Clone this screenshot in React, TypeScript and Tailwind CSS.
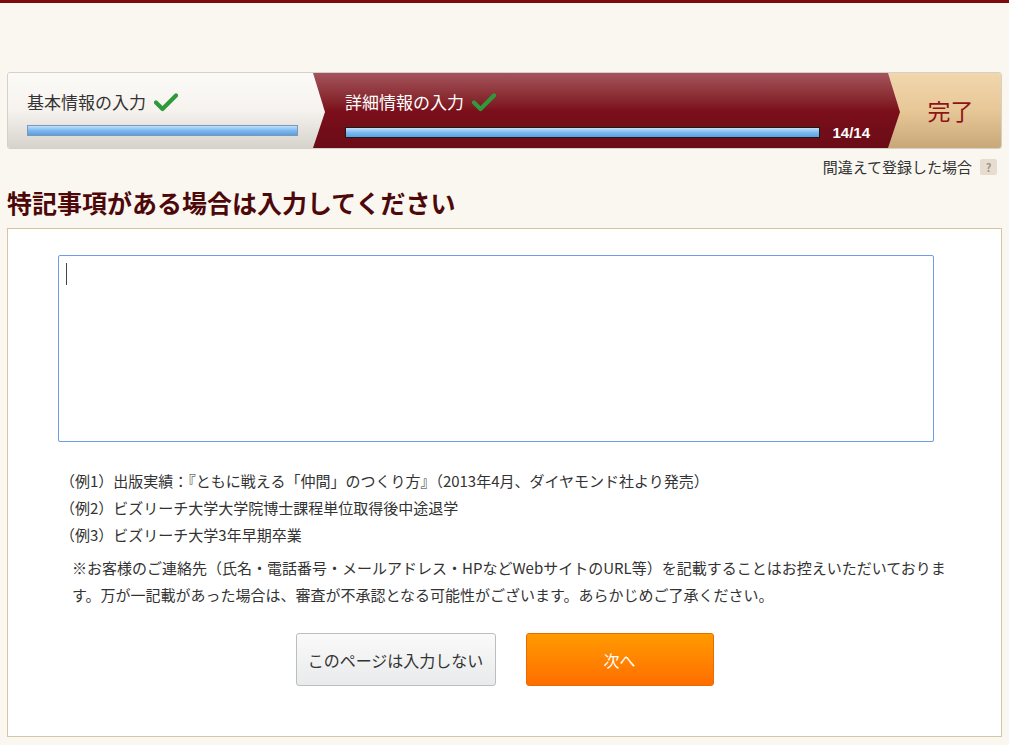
import React from "react"

const font = { fontFamily: '"Noto Sans CJK JP", "Noto Sans", sans-serif' }

function Check() {
  return (
    <svg width="24" height="20" viewBox="0 0 24 20" className="ml-2 shrink-0">
      <path d="M2 10.5 L8.5 17 L22 3.5" fill="none" stroke="#2e9a3c" strokeWidth="4.2" strokeLinecap="round" strokeLinejoin="round" />
    </svg>
  )
}

function Bar({ dark }: { dark?: boolean }) {
  return (
    <div
      className={
        "h-[11px] border bg-gradient-to-b from-[#bfe0fb] via-[#7db8ee] to-[#5d9fe0] " +
        (dark ? "border-[#1b1b1b]" : "border-[#7c98b6]")
      }
    />
  )
}

function Steps() {
  return (
    <div className="mx-[7px] mt-[69px] flex h-[77px] overflow-hidden rounded-[3px] border border-[#d5d0c9]">
      {/* step 1 */}
      <div className="relative z-10 w-[305px] shrink-0 bg-gradient-to-b from-[#fcfaf7] via-[#f6f3ef] to-[#d6d2cc] pl-[19px] pr-[15px] pt-[17px]">
        <div className="flex items-center text-[17px] leading-[24px] text-[#333]">
          基本情報の入力
          <Check />
        </div>
        <div className="mt-[11px]">
          <Bar />
        </div>
        <div className="absolute -right-[12px] top-0 h-full w-[12px] bg-gradient-to-b from-[#fcfaf7] via-[#f6f3ef] to-[#d6d2cc] [clip-path:polygon(0_0,100%_52%,0_100%)]" />
      </div>
      {/* step 2 */}
      <div className="relative flex-1 bg-gradient-to-b from-[#a4535c] via-[#7b0f1b] to-[#6a0c16] pl-[32px] pr-[18px] pt-[17px]">
        <div className="flex items-center text-[17px] leading-[24px] text-white">
          詳細情報の入力
          <Check />
        </div>
        <div className="mt-[11px] flex items-center">
          <div className="flex-1">
            <Bar dark />
          </div>
          <span className="ml-[12px] text-[15px] font-bold leading-none text-white" style={{ fontFamily: '"Liberation Sans", sans-serif' }}>
            14/14
          </span>
        </div>
        <div className="absolute -right-[12px] top-0 z-10 h-full w-[12px] bg-gradient-to-b from-[#a4535c] via-[#7b0f1b] to-[#6a0c16] [clip-path:polygon(0_0,100%_52%,0_100%)]" />
      </div>
      {/* step 3 */}
      <div className="flex w-[113px] shrink-0 items-center justify-center bg-gradient-to-b from-[#f1d7ae] via-[#e8c797] to-[#c8a779] pl-[12px]">
        <span className="text-[23px] text-[#8c1418]">完了</span>
      </div>
    </div>
  )
}

export default function App() {
  return (
    <div className="min-h-[745px] border-t-[3px] border-[#7d0b0b] bg-[#faf7f1] pb-[8px]" style={font}>
      <Steps />

      <div className="mt-[8px] flex items-center justify-end pr-[12px] text-[15px] leading-[20px] text-[#333]">
        間違えて登録した場合
        <span className="ml-[8px] flex h-[16px] w-[17px] items-center justify-center rounded-[2px] bg-[#e6ddd0] text-[11px] font-bold text-[#a09483]">
          ?
        </span>
      </div>

      <h1 className="ml-[7px] mt-[8px] text-[25px] font-bold leading-[34px] text-[#4d0909]">
        特記事項がある場合は入力してください
      </h1>

      <div className="mx-[7px] mt-[9px] h-[509px] border border-[#d9c3a5] bg-white px-[50px] pt-[26px]">
        <div className="relative">
          <textarea className="block h-[187px] w-[876px] resize-none rounded-[2px] border border-[#6d9ce8] bg-white outline-none" />
          <span className="absolute left-[8px] top-[8px] h-[22px] w-px bg-[#444]" />
        </div>

        <div className="mt-[25px] pl-[2px] text-[15px] leading-[27px] text-[#333]">
          <p>（例1）出版実績：『ともに戦える「仲間」のつくり方』（2013年4月、ダイヤモンド社より発売）</p>
          <p>（例2）ビズリーチ大学大学院博士課程単位取得後中途退学</p>
          <p>（例3）ビズリーチ大学3年早期卒業</p>
          <p className="mt-[6px] w-[890px] pl-[12px]">
            ※お客様のご連絡先（氏名・電話番号・メールアドレス・HPなどWebサイトのURL等）を記載することはお控えいただいております。万が一記載があった場合は、審査が不承認となる可能性がございます。あらかじめご了承ください。
          </p>
        </div>

        <div className="mt-[25px] flex justify-center gap-[30px]">
          <button className="h-[53px] w-[200px] rounded-[3px] border border-[#bdbdbd] bg-gradient-to-b from-[#fafafa] to-[#e9eaeb] text-[16px] text-[#333]">
            このページは入力しない
          </button>
          <button className="h-[53px] w-[188px] rounded-[3px] border border-[#e86a00] bg-gradient-to-b from-[#ff9a00] to-[#ff6d00] text-[16px] text-white">
            次へ
          </button>
        </div>
      </div>
    </div>
  )
}
